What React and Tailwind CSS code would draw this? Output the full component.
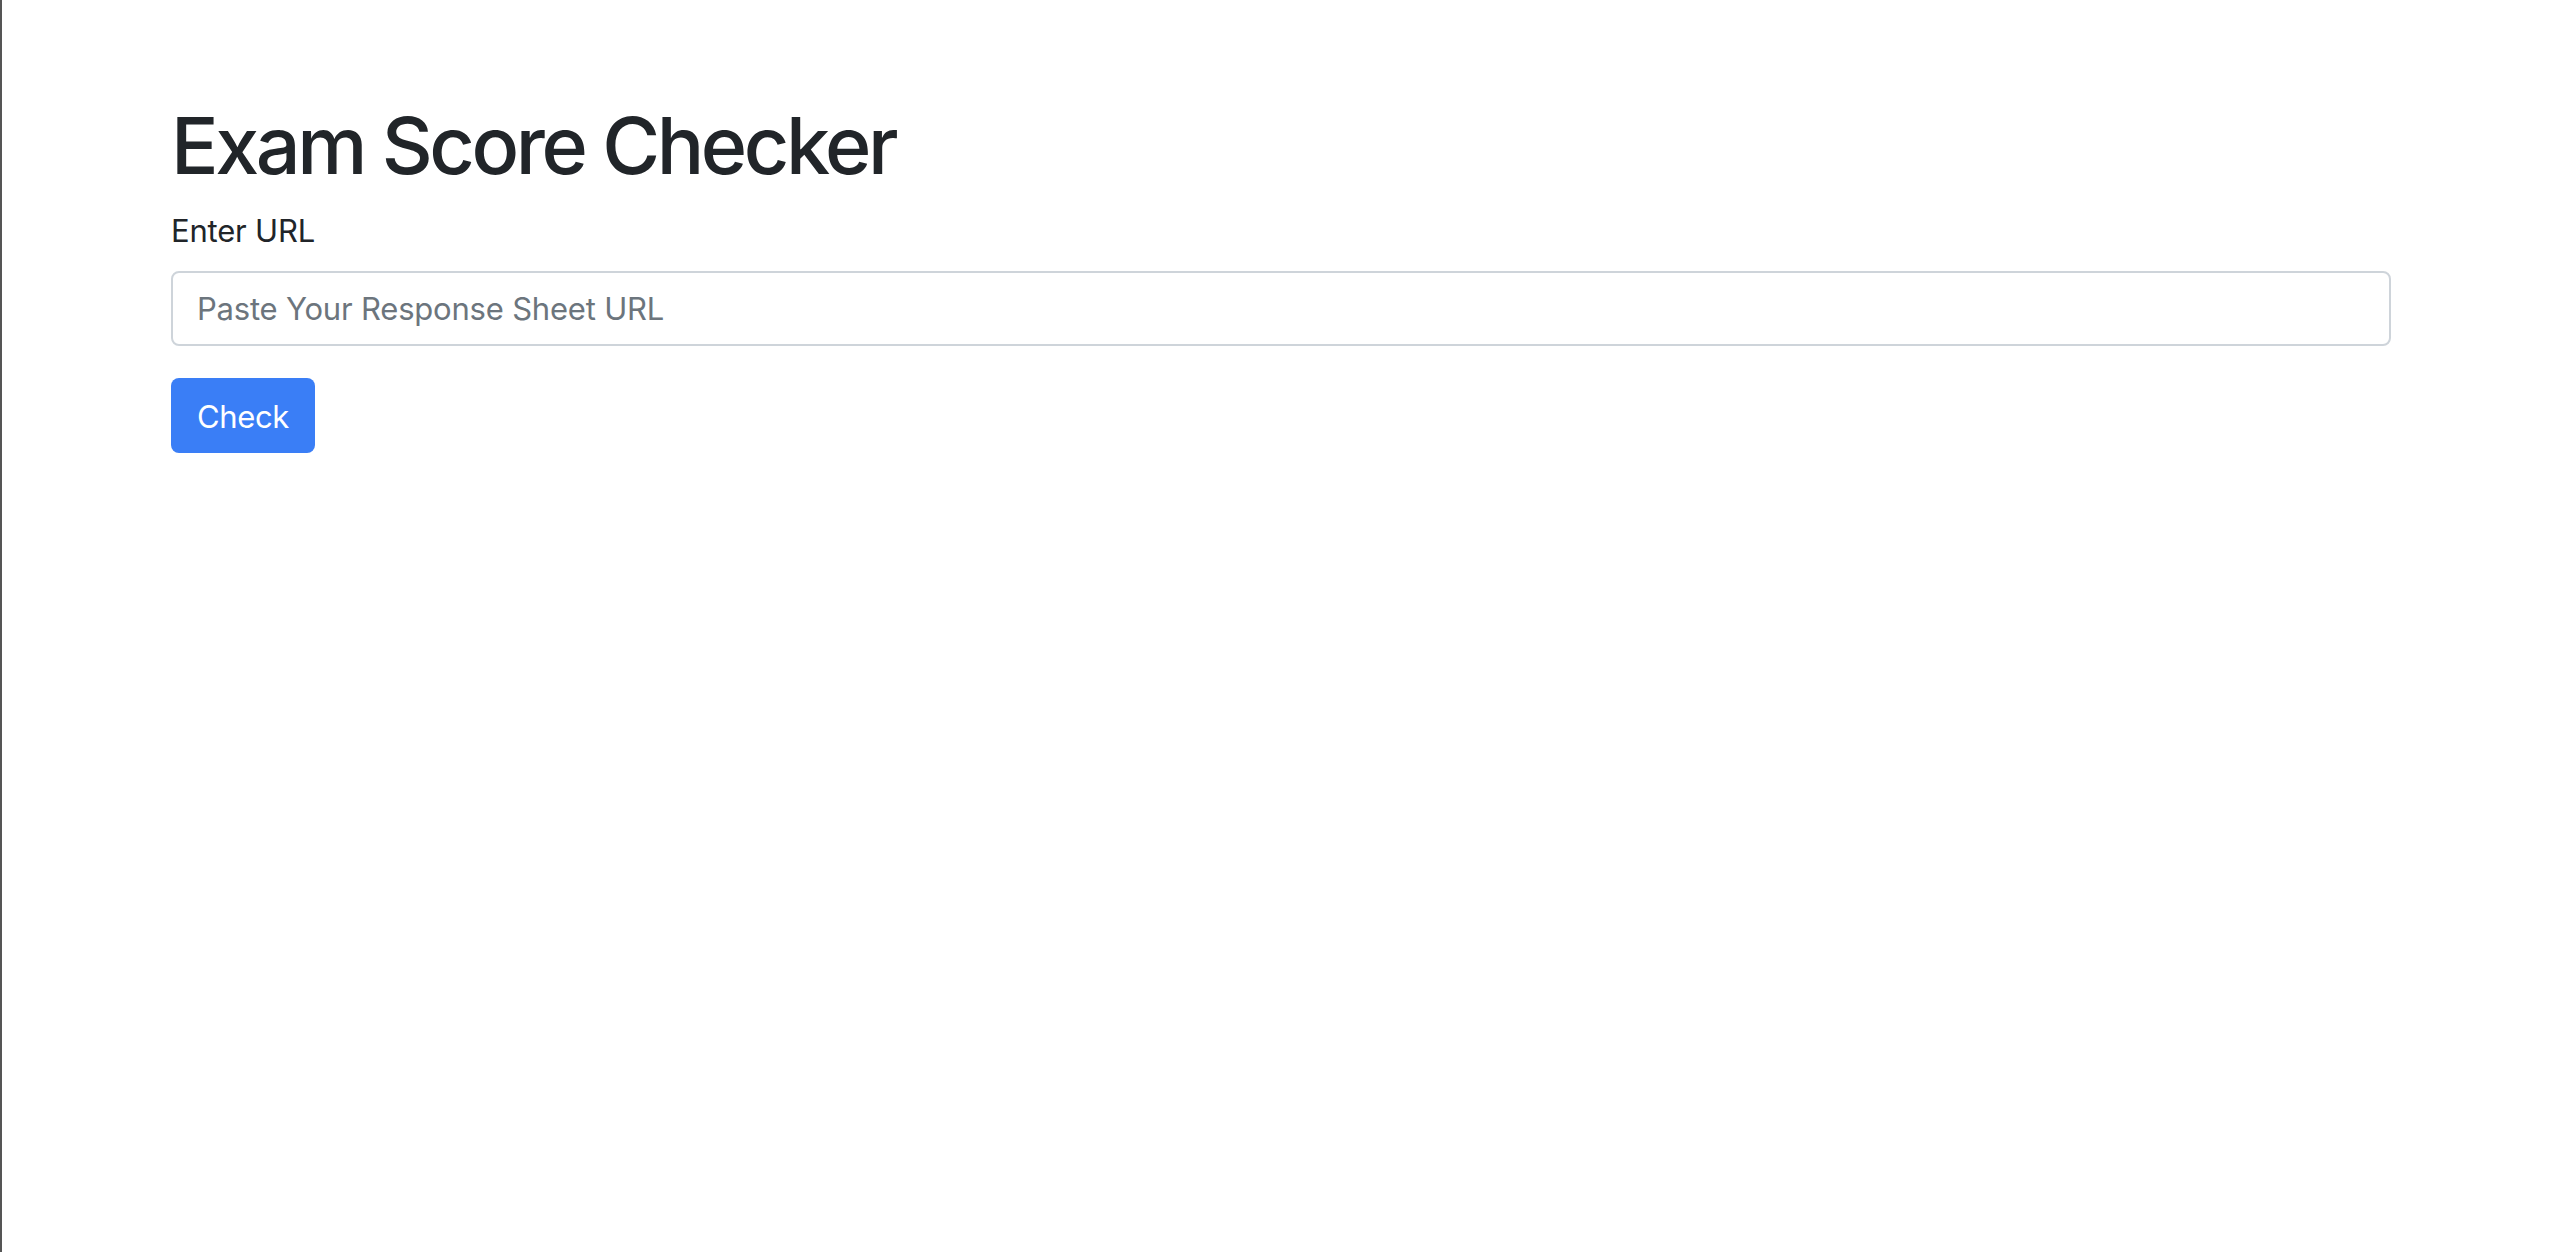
import React, { useState } from 'react';

const App = () => {
  const [url, setUrl] = useState('');

  return (
    <div className="min-h-[1252px] bg-white border-l-2 border-[#555555] font-['Inter','Liberation_Sans',Arial,sans-serif] text-[#212529]">
      <div className="ml-[169px] w-[2220px] pt-[97px]">
        <h1 className="text-[79px] leading-[96px] font-medium tracking-[-3.4px] mb-[14px]">Exam Score Checker</h1>

        <form onSubmit={(e) => e.preventDefault()}>
          <div className="mb-[32px]">
            <label className="block text-[31px] leading-[48px] tracking-[-0.2px] mb-[16px]">Enter URL</label>
            <input
              type="text"
              value={url}
              onChange={(e) => setUrl(e.target.value)}
              placeholder="Paste Your Response Sheet URL"
              className="block w-full h-[75px] px-[24px] text-[31px] tracking-[-0.2px] text-[#495057] bg-white border-2 border-[#ced4da] rounded-[8px] placeholder:text-[#6c757d] focus:outline-none"
            />
          </div>

          <button
            type="submit"
            className="h-[75px] w-[144px] pt-[2px] rounded-[8px] bg-[#3a7ef6] text-white text-[31px] leading-[48px] tracking-[-0.4px]"
          >
            Check
          </button>
        </form>
      </div>
    </div>
  );
};

export default App;
